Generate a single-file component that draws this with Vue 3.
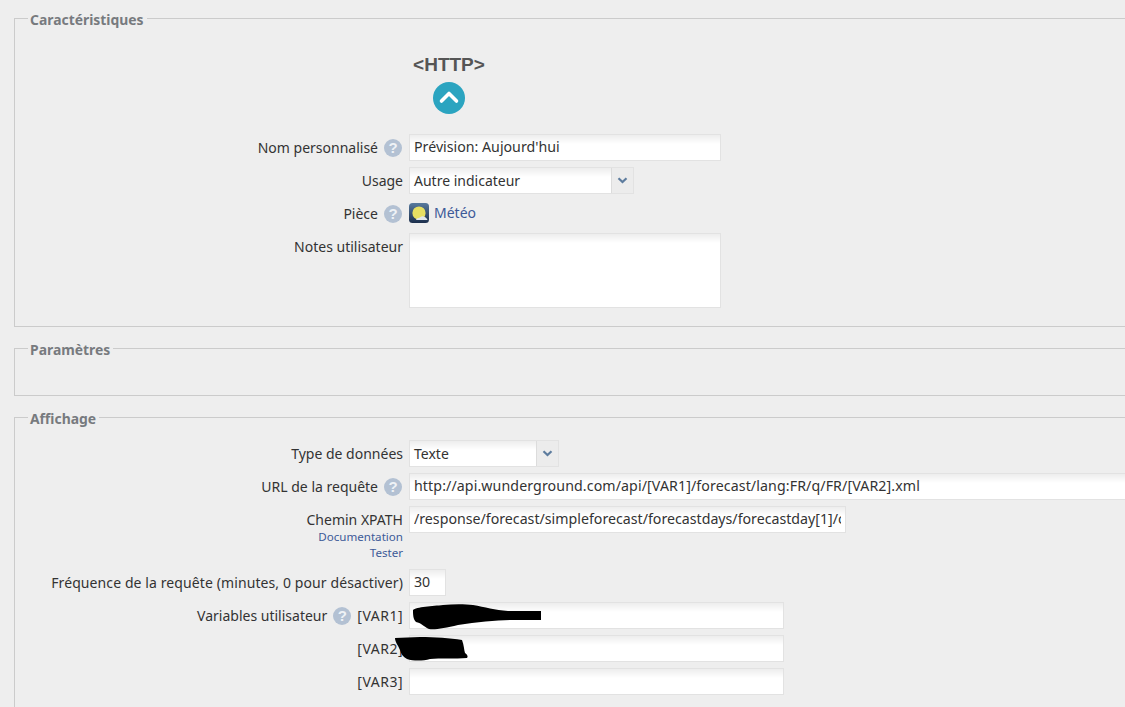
<script setup>
const redactions = [
  { cls: 'blob-one', view: '0 0 129 26', d: 'M0 6 C3 3 20 2 30 1 C40 0 52 0 60 1 C72 3 82 6 95 7 L128 7 L128 16 L100 16 C85 16 65 18 45 21 C32 24 22 26 16 25 C10 22 8 19 3 18 C0 15 0 10 0 6 Z' },
  { cls: 'blob-two', view: '0 0 74 24', d: 'M0 1 L25 0 C40 0 55 1 67 3 C69 8 69 13 70 16 C73 18 73 20 72 21 C60 22 45 21 35 22 C28 24 18 24 12 22 C8 20 6 17 5 13 C3 8 0 5 0 1 Z' },
]
</script>

<template>
  <div class="page">
    <fieldset class="group group-main">
      <legend>Caractéristiques</legend>
      <div class="protocol">
        <div class="protocol-name">&lt;HTTP&gt;</div>
        <svg class="protocol-toggle" width="32" height="32" viewBox="0 0 32 32">
          <circle cx="16" cy="16" r="16" fill="#2ba4c0" />
          <path d="M8.5 19 L16 11.5 L23.5 19" fill="none" stroke="#fff" stroke-width="3.6" stroke-linecap="round" stroke-linejoin="round" />
        </svg>
      </div>
      <div class="row">
        <div class="label">Nom personnalisé<span class="help">?</span></div>
        <input class="field wide" value="Prévision: Aujourd'hui" />
      </div>
      <div class="row">
        <div class="label">Usage</div>
        <div class="select select-usage">
          <span class="select-value">Autre indicateur</span>
          <span class="select-arrow">
            <svg width="11" height="7" viewBox="0 0 11 7"><path d="M1.5 1.2 L5.5 5 L9.5 1.2" fill="none" stroke="#5d7c9e" stroke-width="2.2" /></svg>
          </span>
        </div>
      </div>
      <div class="row row-room">
        <div class="label">Pièce<span class="help">?</span></div>
        <div class="room">
          <svg width="20" height="20" viewBox="0 0 20 20">
            <defs>
              <linearGradient id="sky" x1="0" y1="0" x2="0" y2="1">
                <stop offset="0" stop-color="#587a9e" />
                <stop offset="1" stop-color="#1c2f4d" />
              </linearGradient>
            </defs>
            <rect width="20" height="20" rx="3.5" fill="url(#sky)" />
            <circle cx="10" cy="10" r="6.6" fill="#e6df62" />
            <path d="M7 17 C8 14.5 10 15.5 11.5 14 C13.5 12.5 16 13.5 18.5 16.5 L18 17 Z" fill="#dfe6ea" />
          </svg>
          <a class="link">Météo</a>
        </div>
      </div>
      <div class="row row-notes">
        <div class="label">Notes utilisateur</div>
        <textarea class="field wide notes"></textarea>
      </div>
    </fieldset>

    <fieldset class="group group-params">
      <legend>Paramètres</legend>
    </fieldset>

    <fieldset class="group group-display">
      <legend>Affichage</legend>
      <div class="row">
        <div class="label">Type de données</div>
        <div class="select select-type">
          <span class="select-value">Texte</span>
          <span class="select-arrow">
            <svg width="11" height="7" viewBox="0 0 11 7"><path d="M1.5 1.2 L5.5 5 L9.5 1.2" fill="none" stroke="#5d7c9e" stroke-width="2.2" /></svg>
          </span>
        </div>
      </div>
      <div class="row">
        <div class="label">URL de la requête<span class="help">?</span></div>
        <input class="field url" value="http://api.wunderground.com/api/[VAR1]/forecast/lang:FR/q/FR/[VAR2].xml" />
      </div>
      <div class="row row-xpath">
        <div class="label label-stack">
          <span>Chemin XPATH</span>
          <a class="link small">Documentation</a>
          <a class="link small">Tester</a>
        </div>
        <input class="field xpath" value="/response/forecast/simpleforecast/forecastdays/forecastday[1]/conditions" />
      </div>
      <div class="row">
        <div class="label label-freq">Fréquence de la requête (minutes, 0 pour désactiver)</div>
        <input class="field freq" value="30" />
      </div>
      <div class="row">
        <div class="label">Variables utilisateur<span class="help help-var">?</span><span class="var-name">[VAR1]</span></div>
        <input class="field var" />
      </div>
      <div class="row">
        <div class="label"><span class="var-name">[VAR2]</span></div>
        <input class="field var" />
      </div>
      <div class="row">
        <div class="label"><span class="var-name">[VAR3]</span></div>
        <input class="field var" />
      </div>
    </fieldset>

    <svg v-for="r in redactions" :key="r.cls" :class="['blob', r.cls]" :viewBox="r.view" preserveAspectRatio="none">
      <path :d="r.d" fill="#000" />
    </svg>
  </div>
</template>

<style>
html, body { margin: 0; overflow: hidden; background: #eeeeee; }
</style>

<style scoped>
.page {
  position: relative;
  width: 1125px;
  height: 707px;
  overflow: hidden;
  background: #eeeeee;
  font-family: "Noto Sans", sans-serif;
  font-size: 14px;
  color: #333;
  padding: 8px 0 0 14px;
  box-sizing: border-box;
}
.group {
  box-sizing: border-box;
  width: 1200px;
  margin: 0;
  padding: 0;
  border: 1px solid #cbcbcb;
  min-width: 0;
}
.group legend {
  margin-left: 13px;
  padding: 3px 3px 0 2px;
  font-family: "Noto Sans", sans-serif;
  font-weight: bold;
  font-size: 13.9px;
  line-height: 17px;
  color: #777a7e;
}
.group-main { height: 319px; margin-bottom: 11px; }
.group-params { height: 58px; margin-bottom: 11px; }
.group-display { padding-top: 13px; height: 400px; }
.protocol {
  display: flex;
  flex-direction: column;
  align-items: center;
  width: 72px;
  margin-left: 398px;
  padding-top: 27px;
  margin-bottom: 20px;
}
.protocol-name {
  font-family: "Liberation Sans", sans-serif;
  font-size: 19px;
  font-weight: bold;
  line-height: 20px;
  color: #555;
}
.protocol-toggle { margin-top: 7px; display: block; }
.row {
  display: flex;
  align-items: flex-start;
  margin-bottom: 6px;
}
.label {
  width: 388px;
  flex: none;
  box-sizing: border-box;
  text-align: right;
  line-height: 25px;
  padding-top: 1px;
  margin-right: 6px;
  white-space: nowrap;
}
.label-stack {
  display: flex;
  flex-direction: column;
  align-items: flex-end;
  padding-top: 4px;
}
.label-stack > span { line-height: 19px; }
.label-freq { letter-spacing: 0.1px; }
.var-name { letter-spacing: 0.5px; }
.help {
  display: inline-block;
  width: 18px;
  height: 18px;
  margin-left: 6px;
  margin-right: 1px;
  border-radius: 50%;
  background: #b3c1d3;
  color: #eef2f6;
  font-family: "Liberation Sans", sans-serif;
  font-weight: bold;
  font-size: 15px;
  line-height: 18px;
  text-align: center;
  vertical-align: 0;
}
.help-var { margin-right: 6px; }
.field {
  box-sizing: border-box;
  height: 27px;
  margin: 0;
  padding: 0 4px 2px;
  border: 1px solid #e2e2e2;
  border-radius: 0;
  outline: none;
  background: linear-gradient(to bottom, #ededed 0, #ffffff 9px);
  font-family: "Noto Sans", sans-serif;
  font-size: 14.2px;
  color: #333;
  display: block;
}
.wide { width: 312px; }
.notes { height: 75px; resize: none; }
.url { width: 800px; letter-spacing: 0.1px; }
.xpath { width: 437px; }
.freq { width: 37px; }
.var { width: 375px; }
.select {
  box-sizing: border-box;
  display: flex;
  height: 27px;
  border: 1px solid #e2e2e2;
  background: linear-gradient(to bottom, #ededed 0, #ffffff 9px);
}
.select-usage { width: 225px; }
.select-type { width: 150px; }
.select-value {
  flex: 1;
  padding-left: 4px;
  line-height: 25px;
}
.select-arrow {
  width: 21px;
  flex: none;
  display: flex;
  align-items: center;
  justify-content: center;
  background: #ececec;
  border-left: 1px solid #dcdcdc;
}
.row-room { height: 27px; }
.room {
  display: flex;
  align-items: center;
  gap: 5px;
  height: 20px;
  margin-top: 3px;
}
.room .link { padding-bottom: 2px; }
.link {
  color: #3d5a98;
  cursor: pointer;
}
.small {
  font-size: 11.6px;
  line-height: 16px;
}
.row-xpath { margin-bottom: 8px; }
.blob { position: absolute; display: block; }
.blob-one { left: 413px; top: 604px; width: 129px; height: 26px; }
.blob-two { left: 395px; top: 637px; width: 74px; height: 24px; }
</style>
